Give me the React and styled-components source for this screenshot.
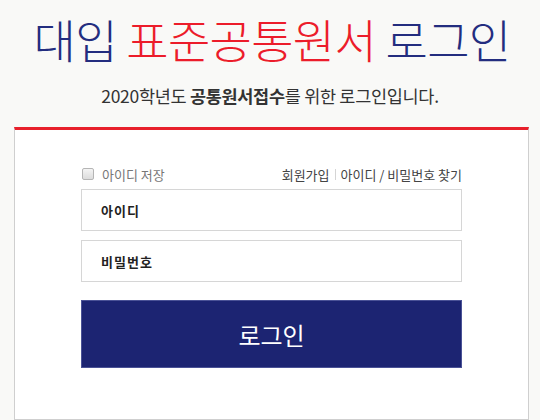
import React from "react";
import styled, { createGlobalStyle } from "styled-components";

const Global = createGlobalStyle`
  html, body { margin: 0; padding: 0; background: #f9f9f7; }
  body { font-family: "Noto Sans CJK KR", "Noto Sans", sans-serif; color: #333; }
  * { box-sizing: border-box; }
`;

const Page = styled.div`
  width: 540px;
  height: 420px;
  overflow: hidden;
  display: flex;
  flex-direction: column;
  padding-top: 12px;
`;

const Title = styled.h1`
  margin: 0;
  padding-left: 4px;
  text-align: center;
  font-size: 46px;
  line-height: 52px;
  font-weight: 300;
  letter-spacing: -0.7px;
  color: #232d7f;
`;

const Red = styled.span`
  color: #ec1c2a;
`;

const Sub = styled.p`
  margin: 20px 0 0;
  text-align: center;
  font-size: 17.5px;
  line-height: 24px;
  letter-spacing: -0.3px;
  color: #333;
  b { font-weight: 700; }
`;

const Card = styled.section`
  margin: 19px 0 0 14px;
  width: 515px;
  flex: 1;
  background: #fff;
  border: 1px solid #cfcfcf;
  border-top: 3px solid #e8202b;
  padding: 36px 66px 0;
  display: flex;
  flex-direction: column;
`;

const TopRow = styled.div`
  display: flex;
  justify-content: space-between;
  align-items: center;
  height: 16px;
  font-size: 12.5px;
  color: #555;
  margin-bottom: 7px;
`;

const SaveLabel = styled.label`
  display: flex;
  align-items: center;
  gap: 8px;
  color: #777;
  font-size: 13px;
  padding-left: 1px;
`;

const Check = styled.span`
  width: 12px;
  height: 12px;
  border: 1px solid #b5b5b5;
  border-radius: 2px;
  background: linear-gradient(#f4f4f4, #dcdcdc);
`;

const Links = styled.div`
  display: flex;
  align-items: center;
  color: #444;
  font-size: 13px;
`;

const Sep = styled.span`
  display: inline-block;
  width: 1px;
  height: 11px;
  background: #d5d5d5;
  margin: 0 5px;
`;

const Field = styled.div`
  height: 42px;
  border: 1px solid #d6d6d6;
  display: flex;
  align-items: center;
  padding-left: 19px;
  font-size: 13px;
  font-weight: 700;
  color: #222;
  letter-spacing: 1px;
  margin-bottom: ${(p) => p.$gap}px;
`;

const Button = styled.button`
  height: 68px;
  border: 1px solid #4a5296;
  background: #1c2472;
  color: #fff;
  font-family: inherit;
  font-size: 24px;
  font-weight: 400;
  cursor: pointer;
`;

export default function App() {
  return (
    <>
      <Global />
      <Page>
        <Title>
          대입 <Red>표준공통원서</Red> 로그인
        </Title>
        <Sub>
          2020학년도 <b>공통원서접수</b>를 위한 로그인입니다.
        </Sub>
        <Card>
          <TopRow>
            <SaveLabel>
              <Check />
              아이디 저장
            </SaveLabel>
            <Links>
              회원가입<Sep />아이디 / 비밀번호 찾기
            </Links>
          </TopRow>
          <Field $gap={9}>아이디</Field>
          <Field $gap={18}>비밀번호</Field>
          <Button>로그인</Button>
        </Card>
      </Page>
    </>
  );
}
